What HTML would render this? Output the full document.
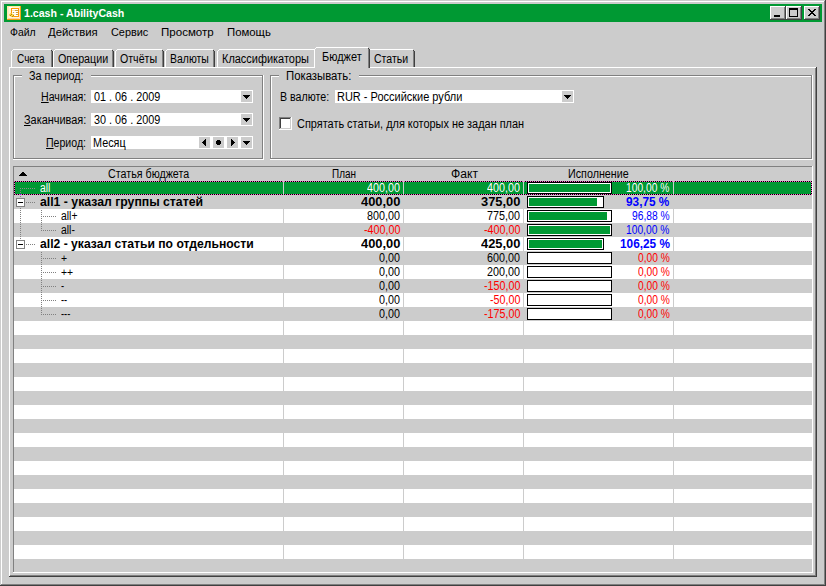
<!DOCTYPE html>
<html lang="ru"><head><meta charset="utf-8"><title>1.cash - AbilityCash</title>
<style>
html,body{margin:0;padding:0}
body{width:826px;height:586px;position:relative;overflow:hidden;background:#cccccc;font-family:"Liberation Sans",sans-serif}
#w div,#w span,#w svg{position:absolute}
#w .t{white-space:nowrap;line-height:1;transform-origin:0 0;display:block;height:1em}
#w u{text-decoration:underline}
</style></head><body><div id="w">
<div style="left:0px;top:0px;width:826px;height:586px;background:#cccccc;"></div>
<div style="left:1px;top:1px;width:823px;height:1px;background:#ffffff;"></div>
<div style="left:1px;top:1px;width:1px;height:583px;background:#ffffff;"></div>
<div style="left:0px;top:585px;width:826px;height:1px;background:#404040;"></div>
<div style="left:825px;top:0px;width:1px;height:586px;background:#404040;"></div>
<div style="left:1px;top:584px;width:824px;height:1px;background:#808080;"></div>
<div style="left:824px;top:1px;width:1px;height:584px;background:#808080;"></div>
<div style="left:4px;top:4px;width:818px;height:18px;background:#009933;"></div>
<svg style="left:7px;top:6px" width="14" height="14" viewBox="0 0 14 14">
<rect x="0" y="0" width="14" height="14" fill="#fff6d8"/>
<rect x="0" y="0" width="14" height="1" fill="#ffee99"/><rect x="0" y="0" width="1" height="14" fill="#ffeeaa"/>
<rect x="13" y="0" width="1" height="14" fill="#f0a818"/><rect x="0" y="13" width="14" height="1" fill="#f0a010"/>
<rect x="1" y="12" width="12" height="1" fill="#ffd0a0"/><rect x="12" y="1" width="1" height="12" fill="#ffe0c0"/>
<rect x="1" y="1" width="1" height="11" fill="#ffe8d0"/>
<rect x="2" y="1" width="3" height="1" fill="#ffffff"/>
<rect x="4.5" y="2.5" width="7" height="8" fill="#ffffff" stroke="#ff9900" stroke-width="1"/>
<rect x="5" y="4" width="6" height="1" fill="#ffe2b0"/><rect x="8" y="4" width="3" height="1" fill="#c8a040"/>
<rect x="5" y="6" width="6" height="1" fill="#fff0d8"/><rect x="6" y="6" width="1" height="1" fill="#c8a040"/><rect x="9" y="6" width="2" height="1" fill="#c8a040"/>
<rect x="5" y="8" width="6" height="1" fill="#fff0d8"/><rect x="9" y="8" width="2" height="1" fill="#c8a040"/>
<path d="M2 8.4 L3.6 6.9 L7.1 8.6 L7.1 9.7 L5.3 11.2 L2 9.4 Z" fill="#ffd24a"/>
<rect x="4" y="8" width="1" height="1" fill="#b89000"/><rect x="3" y="9" width="1" height="1" fill="#b89000"/>
<rect x="6" y="9" width="1" height="1" fill="#b89000"/><rect x="5" y="10" width="1" height="1" fill="#b89000"/>
</svg>
<span class="t" style="left:24.10px;top:8px;font-size:11px;transform:scaleX(0.9633);color:#fff;font-weight:bold;">1.cash - AbilityCash</span>
<div style="left:770px;top:6px;width:16px;height:14px;background:#cccccc;"></div>
<div style="left:770px;top:6px;width:15px;height:1px;background:#ffffff;"></div>
<div style="left:770px;top:6px;width:1px;height:13px;background:#ffffff;"></div>
<div style="left:770px;top:19px;width:16px;height:1px;background:#404040;"></div>
<div style="left:785px;top:6px;width:1px;height:14px;background:#404040;"></div>
<div style="left:771px;top:18px;width:14px;height:1px;background:#808080;"></div>
<div style="left:784px;top:7px;width:1px;height:12px;background:#808080;"></div>
<div style="left:774px;top:15px;width:6px;height:2px;background:#000;"></div>
<div style="left:786px;top:6px;width:16px;height:14px;background:#cccccc;"></div>
<div style="left:786px;top:6px;width:15px;height:1px;background:#ffffff;"></div>
<div style="left:786px;top:6px;width:1px;height:13px;background:#ffffff;"></div>
<div style="left:786px;top:19px;width:16px;height:1px;background:#404040;"></div>
<div style="left:801px;top:6px;width:1px;height:14px;background:#404040;"></div>
<div style="left:787px;top:18px;width:14px;height:1px;background:#808080;"></div>
<div style="left:800px;top:7px;width:1px;height:12px;background:#808080;"></div>
<div style="left:789px;top:8px;width:9px;height:9px;background:#000;"></div>
<div style="left:790px;top:10px;width:7px;height:6px;background:#cccccc;"></div>
<div style="left:804px;top:6px;width:16px;height:14px;background:#cccccc;"></div>
<div style="left:804px;top:6px;width:15px;height:1px;background:#ffffff;"></div>
<div style="left:804px;top:6px;width:1px;height:13px;background:#ffffff;"></div>
<div style="left:804px;top:19px;width:16px;height:1px;background:#404040;"></div>
<div style="left:819px;top:6px;width:1px;height:14px;background:#404040;"></div>
<div style="left:805px;top:18px;width:14px;height:1px;background:#808080;"></div>
<div style="left:818px;top:7px;width:1px;height:12px;background:#808080;"></div>
<svg style="left:808px;top:9px" width="8" height="7" viewBox="0 0 8 7" shape-rendering="crispEdges"><path d="M0 0h2v1h1v1h2v-1h1v-1h2v1h-1v1h-1v1h-1v1h1v1h1v1h1v1h-2v-1h-1v-1h-2v1h-1v1h-2v-1h1v-1h1v-1h1v-1h-1v-1h-1v-1h-1z" fill="#000"/></svg>
<span class="t" style="left:9.60px;top:27px;font-size:11px;transform:scaleX(0.9503);color:#000;">Файл</span>
<span class="t" style="left:48.00px;top:27px;font-size:11px;transform:scaleX(1.0312);color:#000;">Действия</span>
<span class="t" style="left:110.70px;top:27px;font-size:11px;transform:scaleX(0.9902);color:#000;">Сервис</span>
<span class="t" style="left:160.60px;top:27px;font-size:11px;transform:scaleX(1.0490);color:#000;">Просмотр</span>
<span class="t" style="left:226.80px;top:27px;font-size:11px;transform:scaleX(1.0309);color:#000;">Помощь</span>
<div style="left:9px;top:67px;width:807px;height:1px;background:#ffffff;"></div>
<div style="left:9px;top:67px;width:1px;height:509px;background:#ffffff;"></div>
<div style="left:9px;top:576px;width:808px;height:1px;background:#404040;"></div>
<div style="left:816px;top:67px;width:1px;height:510px;background:#404040;"></div>
<div style="left:10px;top:575px;width:806px;height:1px;background:#808080;"></div>
<div style="left:815px;top:68px;width:1px;height:508px;background:#808080;"></div>
<div style="left:13px;top:49px;width:38px;height:1px;background:#ffffff;"></div>
<div style="left:11px;top:51px;width:1px;height:16px;background:#ffffff;"></div>
<div style="left:12px;top:50px;width:1px;height:1px;background:#ffffff;"></div>
<div style="left:51px;top:50px;width:1px;height:1px;background:#404040;"></div>
<div style="left:52px;top:51px;width:1px;height:16px;background:#404040;"></div>
<div style="left:51px;top:51px;width:1px;height:16px;background:#808080;"></div>
<span class="t" style="left:17.30px;top:53px;font-size:12.5px;transform:scaleX(0.8035);color:#000;">Счета</span>
<div style="left:55px;top:49px;width:57px;height:1px;background:#ffffff;"></div>
<div style="left:53px;top:51px;width:1px;height:16px;background:#ffffff;"></div>
<div style="left:54px;top:50px;width:1px;height:1px;background:#ffffff;"></div>
<div style="left:112px;top:50px;width:1px;height:1px;background:#404040;"></div>
<div style="left:113px;top:51px;width:1px;height:16px;background:#404040;"></div>
<div style="left:112px;top:51px;width:1px;height:16px;background:#808080;"></div>
<span class="t" style="left:58.00px;top:53px;font-size:12.5px;transform:scaleX(0.8585);color:#000;">Операции</span>
<div style="left:117px;top:49px;width:45px;height:1px;background:#ffffff;"></div>
<div style="left:115px;top:51px;width:1px;height:16px;background:#ffffff;"></div>
<div style="left:116px;top:50px;width:1px;height:1px;background:#ffffff;"></div>
<div style="left:162px;top:50px;width:1px;height:1px;background:#404040;"></div>
<div style="left:163px;top:51px;width:1px;height:16px;background:#404040;"></div>
<div style="left:162px;top:51px;width:1px;height:16px;background:#808080;"></div>
<span class="t" style="left:120.20px;top:53px;font-size:12.5px;transform:scaleX(0.8482);color:#000;">Отчёты</span>
<div style="left:167px;top:49px;width:46px;height:1px;background:#ffffff;"></div>
<div style="left:165px;top:51px;width:1px;height:16px;background:#ffffff;"></div>
<div style="left:166px;top:50px;width:1px;height:1px;background:#ffffff;"></div>
<div style="left:213px;top:50px;width:1px;height:1px;background:#404040;"></div>
<div style="left:214px;top:51px;width:1px;height:16px;background:#404040;"></div>
<div style="left:213px;top:51px;width:1px;height:16px;background:#808080;"></div>
<span class="t" style="left:170.30px;top:53px;font-size:12.5px;transform:scaleX(0.8363);color:#000;">Валюты</span>
<div style="left:219px;top:49px;width:96px;height:1px;background:#ffffff;"></div>
<div style="left:217px;top:51px;width:1px;height:16px;background:#ffffff;"></div>
<div style="left:218px;top:50px;width:1px;height:1px;background:#ffffff;"></div>
<span class="t" style="left:222.40px;top:53px;font-size:12.5px;transform:scaleX(0.8763);color:#000;">Классификаторы</span>
<div style="left:370px;top:49px;width:43px;height:1px;background:#ffffff;"></div>
<div style="left:413px;top:50px;width:1px;height:1px;background:#404040;"></div>
<div style="left:414px;top:51px;width:1px;height:16px;background:#404040;"></div>
<div style="left:413px;top:51px;width:1px;height:16px;background:#808080;"></div>
<span class="t" style="left:374.10px;top:53px;font-size:12.5px;transform:scaleX(0.8418);color:#000;">Статьи</span>
<div style="left:314px;top:47px;width:56px;height:21px;background:#cccccc;"></div>
<div style="left:316px;top:47px;width:52px;height:1px;background:#ffffff;"></div>
<div style="left:314px;top:49px;width:1px;height:19px;background:#ffffff;"></div>
<div style="left:315px;top:48px;width:1px;height:1px;background:#ffffff;"></div>
<div style="left:368px;top:48px;width:1px;height:1px;background:#404040;"></div>
<div style="left:369px;top:49px;width:1px;height:19px;background:#404040;"></div>
<div style="left:368px;top:49px;width:1px;height:19px;background:#808080;"></div>
<span class="t" style="left:322.00px;top:51px;font-size:12.5px;transform:scaleX(0.8779);color:#000;">Бюджет</span>
<div style="left:13px;top:75px;width:250px;height:1px;background:#808080;"></div>
<div style="left:14px;top:76px;width:250px;height:1px;background:#ffffff;"></div>
<div style="left:13px;top:75px;width:1px;height:84px;background:#808080;"></div>
<div style="left:14px;top:76px;width:1px;height:83px;background:#ffffff;"></div>
<div style="left:13px;top:158px;width:250px;height:1px;background:#808080;"></div>
<div style="left:13px;top:159px;width:251px;height:1px;background:#ffffff;"></div>
<div style="left:262px;top:75px;width:1px;height:84px;background:#808080;"></div>
<div style="left:263px;top:75px;width:1px;height:85px;background:#ffffff;"></div>
<div style="left:22px;top:75px;width:69px;height:2px;background:#cccccc;"></div>
<span class="t" style="left:29.20px;top:70px;font-size:12.5px;transform:scaleX(0.8641);color:#000;">За период:</span>
<div style="left:270px;top:75px;width:542px;height:1px;background:#808080;"></div>
<div style="left:271px;top:76px;width:542px;height:1px;background:#ffffff;"></div>
<div style="left:270px;top:75px;width:1px;height:84px;background:#808080;"></div>
<div style="left:271px;top:76px;width:1px;height:83px;background:#ffffff;"></div>
<div style="left:270px;top:158px;width:542px;height:1px;background:#808080;"></div>
<div style="left:270px;top:159px;width:543px;height:1px;background:#ffffff;"></div>
<div style="left:811px;top:75px;width:1px;height:84px;background:#808080;"></div>
<div style="left:812px;top:75px;width:1px;height:85px;background:#ffffff;"></div>
<div style="left:279px;top:75px;width:80px;height:2px;background:#cccccc;"></div>
<span class="t" style="left:286.20px;top:70px;font-size:12.5px;transform:scaleX(0.9057);color:#000;">Показывать:</span>
<div style="left:91px;top:90px;width:162px;height:13px;background:#ffffff;"></div>
<div style="left:241px;top:91px;width:11px;height:11px;background:#cccccc;"></div>
<div style="left:243px;top:95px;width:7px;height:1px;background:#000;"></div>
<div style="left:244px;top:96px;width:5px;height:1px;background:#000;"></div>
<div style="left:245px;top:97px;width:3px;height:1px;background:#000;"></div>
<div style="left:246px;top:98px;width:1px;height:1px;background:#000;"></div>
<span class="t" style="left:40.50px;top:91px;font-size:12.5px;transform:scaleX(0.8500);color:#000;"><u>Н</u>ачиная:</span>
<span class="t" style="left:94.00px;top:91px;font-size:12.5px;transform:scaleX(0.8672);color:#000;">01 . 06 . 2009</span>
<div style="left:91px;top:113px;width:162px;height:13px;background:#ffffff;"></div>
<div style="left:241px;top:114px;width:11px;height:11px;background:#cccccc;"></div>
<div style="left:243px;top:118px;width:7px;height:1px;background:#000;"></div>
<div style="left:244px;top:119px;width:5px;height:1px;background:#000;"></div>
<div style="left:245px;top:120px;width:3px;height:1px;background:#000;"></div>
<div style="left:246px;top:121px;width:1px;height:1px;background:#000;"></div>
<span class="t" style="left:23.50px;top:114px;font-size:12.5px;transform:scaleX(0.8739);color:#000;"><u>З</u>аканчивая:</span>
<span class="t" style="left:94.00px;top:114px;font-size:12.5px;transform:scaleX(0.8672);color:#000;">30 . 06 . 2009</span>
<div style="left:91px;top:136px;width:162px;height:13px;background:#ffffff;"></div>
<div style="left:241px;top:137px;width:11px;height:11px;background:#cccccc;"></div>
<div style="left:243px;top:141px;width:7px;height:1px;background:#000;"></div>
<div style="left:244px;top:142px;width:5px;height:1px;background:#000;"></div>
<div style="left:245px;top:143px;width:3px;height:1px;background:#000;"></div>
<div style="left:246px;top:144px;width:1px;height:1px;background:#000;"></div>
<span class="t" style="left:45.80px;top:137px;font-size:12.5px;transform:scaleX(0.8454);color:#000;"><u>П</u>ериод:</span>
<span class="t" style="left:92.90px;top:137px;font-size:12.5px;transform:scaleX(0.8651);color:#000;">Месяц</span>
<div style="left:199px;top:137px;width:11px;height:11px;background:#cccccc;"></div>
<div style="left:205px;top:139px;width:1px;height:1px;background:#000;"></div>
<div style="left:204px;top:140px;width:2px;height:1px;background:#000;"></div>
<div style="left:203px;top:141px;width:3px;height:1px;background:#000;"></div>
<div style="left:202px;top:142px;width:4px;height:1px;background:#000;"></div>
<div style="left:203px;top:143px;width:3px;height:1px;background:#000;"></div>
<div style="left:204px;top:144px;width:2px;height:1px;background:#000;"></div>
<div style="left:205px;top:145px;width:1px;height:1px;background:#000;"></div>
<div style="left:213px;top:137px;width:11px;height:11px;background:#cccccc;"></div>
<div style="left:217px;top:140px;width:3px;height:5px;background:#000;"></div>
<div style="left:216px;top:141px;width:5px;height:3px;background:#000;"></div>
<div style="left:227px;top:137px;width:11px;height:11px;background:#cccccc;"></div>
<div style="left:231px;top:139px;width:1px;height:1px;background:#000;"></div>
<div style="left:231px;top:140px;width:2px;height:1px;background:#000;"></div>
<div style="left:231px;top:141px;width:3px;height:1px;background:#000;"></div>
<div style="left:231px;top:142px;width:4px;height:1px;background:#000;"></div>
<div style="left:231px;top:143px;width:3px;height:1px;background:#000;"></div>
<div style="left:231px;top:144px;width:2px;height:1px;background:#000;"></div>
<div style="left:231px;top:145px;width:1px;height:1px;background:#000;"></div>
<span class="t" style="left:280.40px;top:91px;font-size:12.5px;transform:scaleX(0.8514);color:#000;">В валюте:</span>
<div style="left:335px;top:90px;width:239px;height:13px;background:#ffffff;"></div>
<div style="left:562px;top:91px;width:11px;height:11px;background:#cccccc;"></div>
<div style="left:564px;top:95px;width:7px;height:1px;background:#000;"></div>
<div style="left:565px;top:96px;width:5px;height:1px;background:#000;"></div>
<div style="left:566px;top:97px;width:3px;height:1px;background:#000;"></div>
<div style="left:567px;top:98px;width:1px;height:1px;background:#000;"></div>
<span class="t" style="left:337.20px;top:91px;font-size:12.5px;transform:scaleX(0.8787);color:#000;">RUR - Российские рубли</span>
<div style="left:279px;top:117px;width:13px;height:13px;background:#ffffff;"></div>
<div style="left:279px;top:117px;width:12px;height:1px;background:#808080;"></div>
<div style="left:279px;top:117px;width:1px;height:12px;background:#808080;"></div>
<div style="left:280px;top:118px;width:10px;height:1px;background:#404040;"></div>
<div style="left:280px;top:118px;width:1px;height:10px;background:#404040;"></div>
<div style="left:280px;top:128px;width:11px;height:1px;background:#cccccc;"></div>
<div style="left:290px;top:118px;width:1px;height:11px;background:#cccccc;"></div>
<span class="t" style="left:297.10px;top:118px;font-size:12.5px;transform:scaleX(0.8738);color:#000;">Спрятать статьи, для которых не задан план</span>
<div style="left:13px;top:166px;width:800px;height:407px;background:#ffffff;"></div>
<div style="left:13px;top:166px;width:799px;height:1px;background:#808080;"></div>
<div style="left:13px;top:166px;width:1px;height:406px;background:#808080;"></div>
<div style="left:14px;top:167px;width:798px;height:14px;background:#cccccc;"></div>
<div style="left:22px;top:172px;width:2px;height:1px;background:#000;"></div>
<div style="left:21px;top:173px;width:4px;height:1px;background:#000;"></div>
<div style="left:20px;top:174px;width:6px;height:1px;background:#000;"></div>
<div style="left:19px;top:175px;width:8px;height:1px;background:#000;"></div>
<span class="t" style="left:107.90px;top:168px;font-size:12.5px;transform:scaleX(0.8569);color:#000;">Статья бюджета</span>
<span class="t" style="left:331.55px;top:168px;font-size:12.5px;transform:scaleX(0.7931);color:#000;">План</span>
<span class="t" style="left:450.50px;top:168px;font-size:12.5px;transform:scaleX(0.9716);color:#000;">Факт</span>
<span class="t" style="left:568.15px;top:168px;font-size:12.5px;transform:scaleX(0.8589);color:#000;">Исполнение</span>
<div style="left:14px;top:181px;width:798px;height:14px;background:#009933;"></div>
<div style="left:283px;top:181px;width:1px;height:14px;background:#cccccc;"></div>
<div style="left:403px;top:181px;width:1px;height:14px;background:#cccccc;"></div>
<div style="left:523px;top:181px;width:1px;height:14px;background:#cccccc;"></div>
<div style="left:673px;top:181px;width:1px;height:14px;background:#cccccc;"></div>
<div style="left:14px;top:195px;width:798px;height:14px;background:#cccccc;"></div>
<div style="left:283px;top:209px;width:1px;height:14px;background:#cccccc;"></div>
<div style="left:403px;top:209px;width:1px;height:14px;background:#cccccc;"></div>
<div style="left:523px;top:209px;width:1px;height:14px;background:#cccccc;"></div>
<div style="left:673px;top:209px;width:1px;height:14px;background:#cccccc;"></div>
<div style="left:14px;top:223px;width:798px;height:14px;background:#cccccc;"></div>
<div style="left:283px;top:237px;width:1px;height:14px;background:#cccccc;"></div>
<div style="left:403px;top:237px;width:1px;height:14px;background:#cccccc;"></div>
<div style="left:523px;top:237px;width:1px;height:14px;background:#cccccc;"></div>
<div style="left:673px;top:237px;width:1px;height:14px;background:#cccccc;"></div>
<div style="left:14px;top:251px;width:798px;height:14px;background:#cccccc;"></div>
<div style="left:283px;top:265px;width:1px;height:14px;background:#cccccc;"></div>
<div style="left:403px;top:265px;width:1px;height:14px;background:#cccccc;"></div>
<div style="left:523px;top:265px;width:1px;height:14px;background:#cccccc;"></div>
<div style="left:673px;top:265px;width:1px;height:14px;background:#cccccc;"></div>
<div style="left:14px;top:279px;width:798px;height:14px;background:#cccccc;"></div>
<div style="left:283px;top:293px;width:1px;height:14px;background:#cccccc;"></div>
<div style="left:403px;top:293px;width:1px;height:14px;background:#cccccc;"></div>
<div style="left:523px;top:293px;width:1px;height:14px;background:#cccccc;"></div>
<div style="left:673px;top:293px;width:1px;height:14px;background:#cccccc;"></div>
<div style="left:14px;top:307px;width:798px;height:14px;background:#cccccc;"></div>
<div style="left:283px;top:321px;width:1px;height:14px;background:#cccccc;"></div>
<div style="left:403px;top:321px;width:1px;height:14px;background:#cccccc;"></div>
<div style="left:523px;top:321px;width:1px;height:14px;background:#cccccc;"></div>
<div style="left:673px;top:321px;width:1px;height:14px;background:#cccccc;"></div>
<div style="left:14px;top:335px;width:798px;height:14px;background:#cccccc;"></div>
<div style="left:283px;top:349px;width:1px;height:14px;background:#cccccc;"></div>
<div style="left:403px;top:349px;width:1px;height:14px;background:#cccccc;"></div>
<div style="left:523px;top:349px;width:1px;height:14px;background:#cccccc;"></div>
<div style="left:673px;top:349px;width:1px;height:14px;background:#cccccc;"></div>
<div style="left:14px;top:363px;width:798px;height:14px;background:#cccccc;"></div>
<div style="left:283px;top:377px;width:1px;height:14px;background:#cccccc;"></div>
<div style="left:403px;top:377px;width:1px;height:14px;background:#cccccc;"></div>
<div style="left:523px;top:377px;width:1px;height:14px;background:#cccccc;"></div>
<div style="left:673px;top:377px;width:1px;height:14px;background:#cccccc;"></div>
<div style="left:14px;top:391px;width:798px;height:14px;background:#cccccc;"></div>
<div style="left:283px;top:405px;width:1px;height:14px;background:#cccccc;"></div>
<div style="left:403px;top:405px;width:1px;height:14px;background:#cccccc;"></div>
<div style="left:523px;top:405px;width:1px;height:14px;background:#cccccc;"></div>
<div style="left:673px;top:405px;width:1px;height:14px;background:#cccccc;"></div>
<div style="left:14px;top:419px;width:798px;height:14px;background:#cccccc;"></div>
<div style="left:283px;top:433px;width:1px;height:14px;background:#cccccc;"></div>
<div style="left:403px;top:433px;width:1px;height:14px;background:#cccccc;"></div>
<div style="left:523px;top:433px;width:1px;height:14px;background:#cccccc;"></div>
<div style="left:673px;top:433px;width:1px;height:14px;background:#cccccc;"></div>
<div style="left:14px;top:447px;width:798px;height:14px;background:#cccccc;"></div>
<div style="left:283px;top:461px;width:1px;height:14px;background:#cccccc;"></div>
<div style="left:403px;top:461px;width:1px;height:14px;background:#cccccc;"></div>
<div style="left:523px;top:461px;width:1px;height:14px;background:#cccccc;"></div>
<div style="left:673px;top:461px;width:1px;height:14px;background:#cccccc;"></div>
<div style="left:14px;top:475px;width:798px;height:14px;background:#cccccc;"></div>
<div style="left:283px;top:489px;width:1px;height:14px;background:#cccccc;"></div>
<div style="left:403px;top:489px;width:1px;height:14px;background:#cccccc;"></div>
<div style="left:523px;top:489px;width:1px;height:14px;background:#cccccc;"></div>
<div style="left:673px;top:489px;width:1px;height:14px;background:#cccccc;"></div>
<div style="left:14px;top:503px;width:798px;height:14px;background:#cccccc;"></div>
<div style="left:283px;top:517px;width:1px;height:14px;background:#cccccc;"></div>
<div style="left:403px;top:517px;width:1px;height:14px;background:#cccccc;"></div>
<div style="left:523px;top:517px;width:1px;height:14px;background:#cccccc;"></div>
<div style="left:673px;top:517px;width:1px;height:14px;background:#cccccc;"></div>
<div style="left:14px;top:531px;width:798px;height:14px;background:#cccccc;"></div>
<div style="left:283px;top:545px;width:1px;height:14px;background:#cccccc;"></div>
<div style="left:403px;top:545px;width:1px;height:14px;background:#cccccc;"></div>
<div style="left:523px;top:545px;width:1px;height:14px;background:#cccccc;"></div>
<div style="left:673px;top:545px;width:1px;height:14px;background:#cccccc;"></div>
<div style="left:14px;top:559px;width:798px;height:13px;background:#cccccc;"></div>
<div style="left:20px;top:188px;width:1px;height:57px;background:repeating-linear-gradient(to bottom,#808080 0,#808080 1px,transparent 1px,transparent 2px)"></div>
<div style="left:41px;top:210px;width:1px;height:21px;background:repeating-linear-gradient(to bottom,#808080 0,#808080 1px,transparent 1px,transparent 2px)"></div>
<div style="left:41px;top:252px;width:1px;height:63px;background:repeating-linear-gradient(to bottom,#808080 0,#808080 1px,transparent 1px,transparent 2px)"></div>
<div style="left:20px;top:188px;width:16px;height:1px;background:repeating-linear-gradient(to right,#8c8c8c 0,#8c8c8c 1px,transparent 1px,transparent 2px)"></div>
<span class="t" style="left:40.00px;top:182px;font-size:12.5px;transform:scaleX(0.8300);color:#fff;">all</span>
<span class="t" style="left:367.12px;top:182px;font-size:12.5px;transform:scaleX(0.8600);color:#fff;">400,00</span>
<span class="t" style="left:487.12px;top:182px;font-size:12.5px;transform:scaleX(0.8600);color:#fff;">400,00</span>
<div style="left:527px;top:182px;width:85px;height:12px;background:#000;"></div>
<div style="left:528px;top:183px;width:83px;height:10px;background:#ffffff;"></div>
<div style="left:529px;top:184px;width:81px;height:8px;background:#009933;"></div>
<span class="t" style="left:626.19px;top:182px;font-size:12.5px;transform:scaleX(0.8200);color:#fff;">100,00 %</span>
<div style="left:26px;top:202px;width:10px;height:1px;background:repeating-linear-gradient(to right,#808080 0,#808080 1px,transparent 1px,transparent 2px)"></div>
<div style="left:16px;top:198px;width:9px;height:9px;background:#808080;"></div>
<div style="left:17px;top:199px;width:7px;height:7px;background:#ffffff;"></div>
<div style="left:18px;top:202px;width:5px;height:1px;background:#000;"></div>
<span class="t" style="left:40.00px;top:196px;font-size:12.5px;transform:scaleX(0.9800);color:#000;font-weight:bold;">all1 - указал группы статей</span>
<span class="t" style="left:360.62px;top:196px;font-size:12.5px;transform:scaleX(1.0300);color:#000;font-weight:bold;">400,00</span>
<span class="t" style="left:480.62px;top:196px;font-size:12.5px;transform:scaleX(1.0300);color:#000;font-weight:bold;">375,00</span>
<div style="left:527px;top:196px;width:77px;height:12px;background:#000;"></div>
<div style="left:528px;top:197px;width:75px;height:10px;background:#ffffff;"></div>
<div style="left:529px;top:198px;width:68px;height:8px;background:#009933;"></div>
<span class="t" style="left:626.15px;top:196px;font-size:12.5px;transform:scaleX(0.9450);color:#0000ff;font-weight:bold;">93,75 %</span>
<div style="left:41px;top:216px;width:16px;height:1px;background:repeating-linear-gradient(to right,#808080 0,#808080 1px,transparent 1px,transparent 2px)"></div>
<span class="t" style="left:61.00px;top:210px;font-size:12.5px;transform:scaleX(0.8300);color:#000;">all+</span>
<span class="t" style="left:367.12px;top:210px;font-size:12.5px;transform:scaleX(0.8600);color:#000;">800,00</span>
<span class="t" style="left:487.12px;top:210px;font-size:12.5px;transform:scaleX(0.8600);color:#000;">775,00</span>
<div style="left:527px;top:210px;width:85px;height:12px;background:#000;"></div>
<div style="left:528px;top:211px;width:83px;height:10px;background:#ffffff;"></div>
<div style="left:529px;top:212px;width:78px;height:8px;background:#009933;"></div>
<span class="t" style="left:631.89px;top:210px;font-size:12.5px;transform:scaleX(0.8200);color:#0000ff;">96,88 %</span>
<div style="left:41px;top:230px;width:16px;height:1px;background:repeating-linear-gradient(to right,#808080 0,#808080 1px,transparent 1px,transparent 2px)"></div>
<span class="t" style="left:61.00px;top:224px;font-size:12.5px;transform:scaleX(0.8300);color:#000;">all-</span>
<span class="t" style="left:363.54px;top:224px;font-size:12.5px;transform:scaleX(0.8600);color:#ff0000;">-400,00</span>
<span class="t" style="left:483.54px;top:224px;font-size:12.5px;transform:scaleX(0.8600);color:#ff0000;">-400,00</span>
<div style="left:527px;top:224px;width:85px;height:12px;background:#000;"></div>
<div style="left:528px;top:225px;width:83px;height:10px;background:#ffffff;"></div>
<div style="left:529px;top:226px;width:81px;height:8px;background:#009933;"></div>
<span class="t" style="left:626.19px;top:224px;font-size:12.5px;transform:scaleX(0.8200);color:#0000ff;">100,00 %</span>
<div style="left:26px;top:244px;width:10px;height:1px;background:repeating-linear-gradient(to right,#808080 0,#808080 1px,transparent 1px,transparent 2px)"></div>
<div style="left:16px;top:240px;width:9px;height:9px;background:#808080;"></div>
<div style="left:17px;top:241px;width:7px;height:7px;background:#ffffff;"></div>
<div style="left:18px;top:244px;width:5px;height:1px;background:#000;"></div>
<span class="t" style="left:40.00px;top:238px;font-size:12.5px;transform:scaleX(0.9720);color:#000;font-weight:bold;">all2 - указал статьи по отдельности</span>
<span class="t" style="left:360.62px;top:238px;font-size:12.5px;transform:scaleX(1.0300);color:#000;font-weight:bold;">400,00</span>
<span class="t" style="left:480.62px;top:238px;font-size:12.5px;transform:scaleX(1.0300);color:#000;font-weight:bold;">425,00</span>
<div style="left:527px;top:238px;width:77px;height:12px;background:#000;"></div>
<div style="left:528px;top:239px;width:75px;height:10px;background:#ffffff;"></div>
<div style="left:529px;top:240px;width:73px;height:8px;background:#009933;"></div>
<span class="t" style="left:619.58px;top:238px;font-size:12.5px;transform:scaleX(0.9450);color:#0000ff;font-weight:bold;">106,25 %</span>
<div style="left:41px;top:258px;width:16px;height:1px;background:repeating-linear-gradient(to right,#808080 0,#808080 1px,transparent 1px,transparent 2px)"></div>
<span class="t" style="left:61.00px;top:253px;font-size:10.5px;transform:scaleX(0.9900);color:#000;">+</span>
<span class="t" style="left:379.08px;top:252px;font-size:12.5px;transform:scaleX(0.8600);color:#000;">0,00</span>
<span class="t" style="left:487.12px;top:252px;font-size:12.5px;transform:scaleX(0.8600);color:#000;">600,00</span>
<div style="left:527px;top:252px;width:85px;height:12px;background:#000;"></div>
<div style="left:528px;top:253px;width:83px;height:10px;background:#ffffff;"></div>
<span class="t" style="left:637.59px;top:252px;font-size:12.5px;transform:scaleX(0.8200);color:#ff0000;">0,00 %</span>
<div style="left:41px;top:272px;width:16px;height:1px;background:repeating-linear-gradient(to right,#808080 0,#808080 1px,transparent 1px,transparent 2px)"></div>
<span class="t" style="left:61.00px;top:267px;font-size:10.5px;transform:scaleX(0.9900);color:#000;">++</span>
<span class="t" style="left:379.08px;top:266px;font-size:12.5px;transform:scaleX(0.8600);color:#000;">0,00</span>
<span class="t" style="left:487.12px;top:266px;font-size:12.5px;transform:scaleX(0.8600);color:#000;">200,00</span>
<div style="left:527px;top:266px;width:85px;height:12px;background:#000;"></div>
<div style="left:528px;top:267px;width:83px;height:10px;background:#ffffff;"></div>
<span class="t" style="left:637.59px;top:266px;font-size:12.5px;transform:scaleX(0.8200);color:#ff0000;">0,00 %</span>
<div style="left:41px;top:286px;width:16px;height:1px;background:repeating-linear-gradient(to right,#808080 0,#808080 1px,transparent 1px,transparent 2px)"></div>
<span class="t" style="left:61.00px;top:280px;font-size:12.5px;transform:scaleX(0.7500);color:#000;">-</span>
<span class="t" style="left:379.08px;top:280px;font-size:12.5px;transform:scaleX(0.8600);color:#000;">0,00</span>
<span class="t" style="left:483.54px;top:280px;font-size:12.5px;transform:scaleX(0.8600);color:#ff0000;">-150,00</span>
<div style="left:527px;top:280px;width:85px;height:12px;background:#000;"></div>
<div style="left:528px;top:281px;width:83px;height:10px;background:#ffffff;"></div>
<span class="t" style="left:637.59px;top:280px;font-size:12.5px;transform:scaleX(0.8200);color:#ff0000;">0,00 %</span>
<div style="left:41px;top:300px;width:16px;height:1px;background:repeating-linear-gradient(to right,#808080 0,#808080 1px,transparent 1px,transparent 2px)"></div>
<span class="t" style="left:61.00px;top:294px;font-size:12.5px;transform:scaleX(0.7500);color:#000;">--</span>
<span class="t" style="left:379.08px;top:294px;font-size:12.5px;transform:scaleX(0.8600);color:#000;">0,00</span>
<span class="t" style="left:489.52px;top:294px;font-size:12.5px;transform:scaleX(0.8600);color:#ff0000;">-50,00</span>
<div style="left:527px;top:294px;width:85px;height:12px;background:#000;"></div>
<div style="left:528px;top:295px;width:83px;height:10px;background:#ffffff;"></div>
<span class="t" style="left:637.59px;top:294px;font-size:12.5px;transform:scaleX(0.8200);color:#ff0000;">0,00 %</span>
<div style="left:41px;top:314px;width:16px;height:1px;background:repeating-linear-gradient(to right,#808080 0,#808080 1px,transparent 1px,transparent 2px)"></div>
<span class="t" style="left:61.00px;top:308px;font-size:12.5px;transform:scaleX(0.7500);color:#000;">---</span>
<span class="t" style="left:379.08px;top:308px;font-size:12.5px;transform:scaleX(0.8600);color:#000;">0,00</span>
<span class="t" style="left:483.54px;top:308px;font-size:12.5px;transform:scaleX(0.8600);color:#ff0000;">-175,00</span>
<div style="left:527px;top:308px;width:85px;height:12px;background:#000;"></div>
<div style="left:528px;top:309px;width:83px;height:10px;background:#ffffff;"></div>
<span class="t" style="left:637.59px;top:308px;font-size:12.5px;transform:scaleX(0.8200);color:#ff0000;">0,00 %</span>
<div style="left:14px;top:181px;width:798px;height:1px;background:repeating-linear-gradient(to right,#ff66cc 0,#ff66cc 1px,#000 1px,#000 2px)"></div>
<div style="left:14px;top:194px;width:798px;height:1px;background:repeating-linear-gradient(to right,#000 0,#000 1px,#ff66cc 1px,#ff66cc 2px)"></div>
<div style="left:14px;top:181px;width:1px;height:14px;background:repeating-linear-gradient(to bottom,#ff66cc 0,#ff66cc 1px,#000 1px,#000 2px)"></div>
<div style="left:811px;top:181px;width:1px;height:14px;background:repeating-linear-gradient(to bottom,#000 0,#000 1px,#ff66cc 1px,#ff66cc 2px)"></div>
<div style="left:20px;top:194px;width:1px;height:1px;background:#8000ff;"></div>
<div style="left:283px;top:181px;width:1px;height:14px;background:#cccccc;"></div>
<div style="left:403px;top:181px;width:1px;height:14px;background:#cccccc;"></div>
<div style="left:523px;top:181px;width:1px;height:14px;background:#cccccc;"></div>
<div style="left:673px;top:181px;width:1px;height:14px;background:#cccccc;"></div>
</div></body></html>
